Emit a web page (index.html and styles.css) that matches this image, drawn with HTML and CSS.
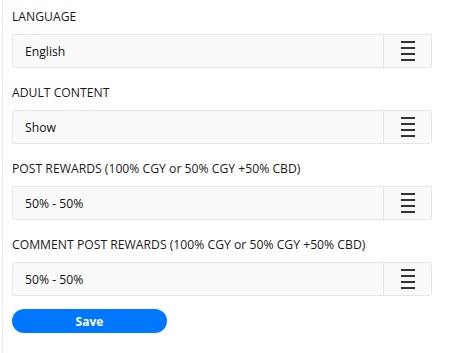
FILE: index.html
```html
<!DOCTYPE html>
<html lang="en">
<head>
    <meta charset="UTF-8">
    <meta name="viewport" content="width=device-width, initial-scale=1.0">
    <title>Settings</title>
    <link rel="stylesheet" href="styles.css">
</head>
<body>

    <div class="panel">
        <!-- Language -->
        <div class="field">
            <label class="field-label">LANGUAGE</label>
            <div class="select-box">
                <span class="select-value">English</span>
                <span class="select-toggle">
                    <svg width="14" height="20" viewBox="0 0 14 20"><path d="M0 1h14M0 7h14M0 13h14M0 19h14" stroke="#333" stroke-width="2"/></svg>
                </span>
            </div>
        </div>

        <!-- Adult content -->
        <div class="field">
            <label class="field-label">ADULT CONTENT</label>
            <div class="select-box">
                <span class="select-value">Show</span>
                <span class="select-toggle">
                    <svg width="14" height="20" viewBox="0 0 14 20"><path d="M0 1h14M0 7h14M0 13h14M0 19h14" stroke="#333" stroke-width="2"/></svg>
                </span>
            </div>
        </div>

        <!-- Post rewards -->
        <div class="field">
            <label class="field-label">POST REWARDS (100% CGY or 50% CGY +50% CBD)</label>
            <div class="select-box">
                <span class="select-value">50% - 50%</span>
                <span class="select-toggle">
                    <svg width="14" height="20" viewBox="0 0 14 20"><path d="M0 1h14M0 7h14M0 13h14M0 19h14" stroke="#333" stroke-width="2"/></svg>
                </span>
            </div>
        </div>

        <!-- Comment post rewards -->
        <div class="field">
            <label class="field-label">COMMENT POST REWARDS (100% CGY or 50% CGY +50% CBD)</label>
            <div class="select-box">
                <span class="select-value">50% - 50%</span>
                <span class="select-toggle">
                    <svg width="14" height="20" viewBox="0 0 14 20"><path d="M0 1h14M0 7h14M0 13h14M0 19h14" stroke="#333" stroke-width="2"/></svg>
                </span>
            </div>
        </div>

        <button class="save-btn">Save</button>
    </div>

</body>
</html>
```

FILE: styles.css
```css
body {
    margin: 0;
    font-family: "Open Sans", "Noto Sans", sans-serif;
    background: #fff;
    color: #222;
}

.panel {
    margin-left: 2px;
    border-left: 1px solid #ececec;
    padding: 8px 0 20px 9px;
    width: 420px;
    min-height: 325px;
}

.field {
    margin-bottom: 16px;
}

.field:last-of-type {
    margin-bottom: 13px;
}

.field-label {
    display: block;
    font-size: 12.2px;
    line-height: 18px;
    color: #1a1a1a;
    margin-bottom: 8px;
}

.select-box {
    display: flex;
    height: 34px;
    box-sizing: border-box;
    border: 1px solid #e6e6e6;
    border-radius: 3px;
    background: #fafafa;
}

.select-value {
    flex: 1;
    display: flex;
    align-items: center;
    padding-left: 12px;
    font-size: 12.2px;
    color: #111;
}

.select-toggle {
    width: 47px;
    border-left: 1px solid #e6e6e6;
    display: flex;
    align-items: center;
    justify-content: center;
}

.save-btn {
    display: block;
    width: 155px;
    height: 24px;
    border: none;
    border-radius: 12px;
    background: #0077ff;
    color: #fff;
    font-family: "Open Sans", "Noto Sans", sans-serif;
    font-weight: bold;
    font-size: 12px;
    padding: 0;
}
```
